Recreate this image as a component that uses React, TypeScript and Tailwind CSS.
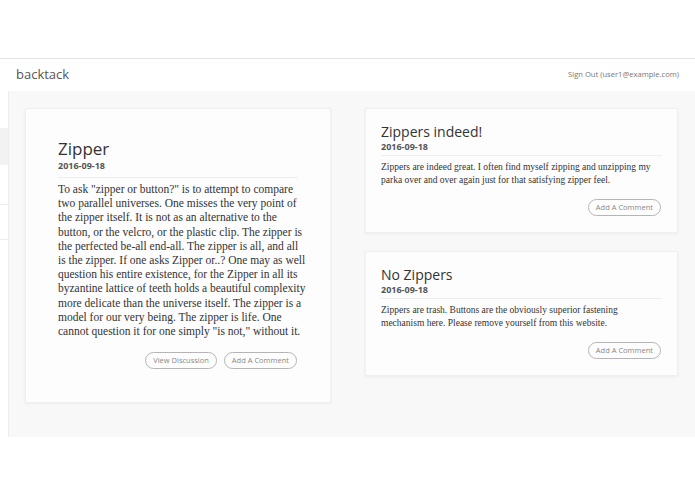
const zipperLines = [
  'To ask "zipper or button?" is to attempt to compare',
  'two parallel universes. One misses the very point of',
  'the zipper itself. It is not as an alternative to the',
  'button, or the velcro, or the plastic clip. The zipper is',
  'the perfected be-all end-all. The zipper is all, and all',
  'is the zipper. If one asks Zipper or..? One may as well',
  'question his entire existence, for the Zipper in all its',
  'byzantine lattice of teeth holds a beautiful complexity',
  'more delicate than the universe itself. The zipper is a',
  'model for our very being. The zipper is life. One',
  'cannot question it for one simply "is not," without it.',
];

const comments = [
  {
    title: 'Zippers indeed!',
    date: '2016-09-18',
    lines: [
      'Zippers are indeed great. I often find myself zipping and unzipping my',
      'parka over and over again just for that satisfying zipper feel.',
    ],
  },
  {
    title: 'No Zippers',
    date: '2016-09-18',
    lines: [
      'Zippers are trash. Buttons are the obviously superior fastening',
      'mechanism here. Please remove yourself from this website.',
    ],
  },
];

function PillButton({ label }: { label: string }) {
  return (
    <button className="h-[17px] px-[7px] rounded-full border border-[#b5b5b5] text-[7.5px] leading-none text-[#888] bg-transparent">
      {label}
    </button>
  );
}

function Lines({ lines }: { lines: string[] }) {
  return (
    <>
      {lines.map((l, i) => (
        <span key={i} className="block whitespace-nowrap">
          {l}
        </span>
      ))}
    </>
  );
}

export default function App() {
  return (
    <div className="w-[695px] h-[494px] bg-white font-['Open_Sans',sans-serif] overflow-hidden">
      <div className="h-[58px]" />
      <header className="h-[33px] border-t border-[#e3e3e3] flex items-center justify-between pl-4 pr-[16px] shadow-[0_1px_2px_rgba(0,0,0,0.04)]">
        <span className="text-[13px] text-[#555]">backtack</span>
        <span className="text-[7.6px] text-[#777]">Sign Out (user1@example.com)</span>
      </header>

      <div className="flex h-[346px] bg-[#f8f8f8]">
        <aside className="w-[9px] bg-white border-r border-[#ececec] flex flex-col">
          <div className="h-[37px]" />
          <div className="h-[37px] bg-[#f2f2f2]" />
          <div className="h-[40px] border-b border-[#ececec]" />
          <div className="h-[35px] border-b border-[#ececec]" />
        </aside>

        <main className="flex-1 flex items-start gap-[34px] pt-[17px] pl-4 pr-[17px]">
          <article className="w-[306px] h-[295px] bg-[#fdfdfd] border border-[#efefef] shadow-[0_1px_3px_rgba(0,0,0,0.05)] pt-[28px] px-[32px]">
            <h1 className="text-[17px] leading-[23px] text-[#333]">Zipper</h1>
            <div className="text-[9px] font-bold text-[#555] leading-[12px]">2016-09-18</div>
            <div className="border-b border-[#eee] mt-[5px]" />
            <div className="mt-[4px] font-['Liberation_Serif',serif] text-[11.5px] leading-[14.2px] text-[#333]">
              <Lines lines={zipperLines} />
            </div>
            <div className="flex justify-end gap-[7px] mt-[14px] pr-[1px]">
              <PillButton label="View Discussion" />
              <PillButton label="Add A Comment" />
            </div>
          </article>

          <div className="flex flex-col gap-[18px]">
            {comments.map((c) => (
              <section
                key={c.title}
                className="w-[313px] h-[125px] bg-[#fdfdfd] border border-[#efefef] shadow-[0_1px_3px_rgba(0,0,0,0.05)] pt-[13px] px-[15px]"
              >
                <h2 className="text-[14px] leading-[19px] text-[#333]">{c.title}</h2>
                <div className="text-[9px] font-bold text-[#555] leading-[12px]">{c.date}</div>
                <div className="border-b border-[#eee] mt-[2px]" />
                <div className="mt-[5px] font-['Liberation_Serif',serif] text-[9.5px] leading-[13px] text-[#333]">
                  <Lines lines={c.lines} />
                </div>
                <div className="flex justify-end mt-[12px] pr-[1px]">
                  <PillButton label="Add A Comment" />
                </div>
              </section>
            ))}
          </div>
        </main>
      </div>
    </div>
  );
}
